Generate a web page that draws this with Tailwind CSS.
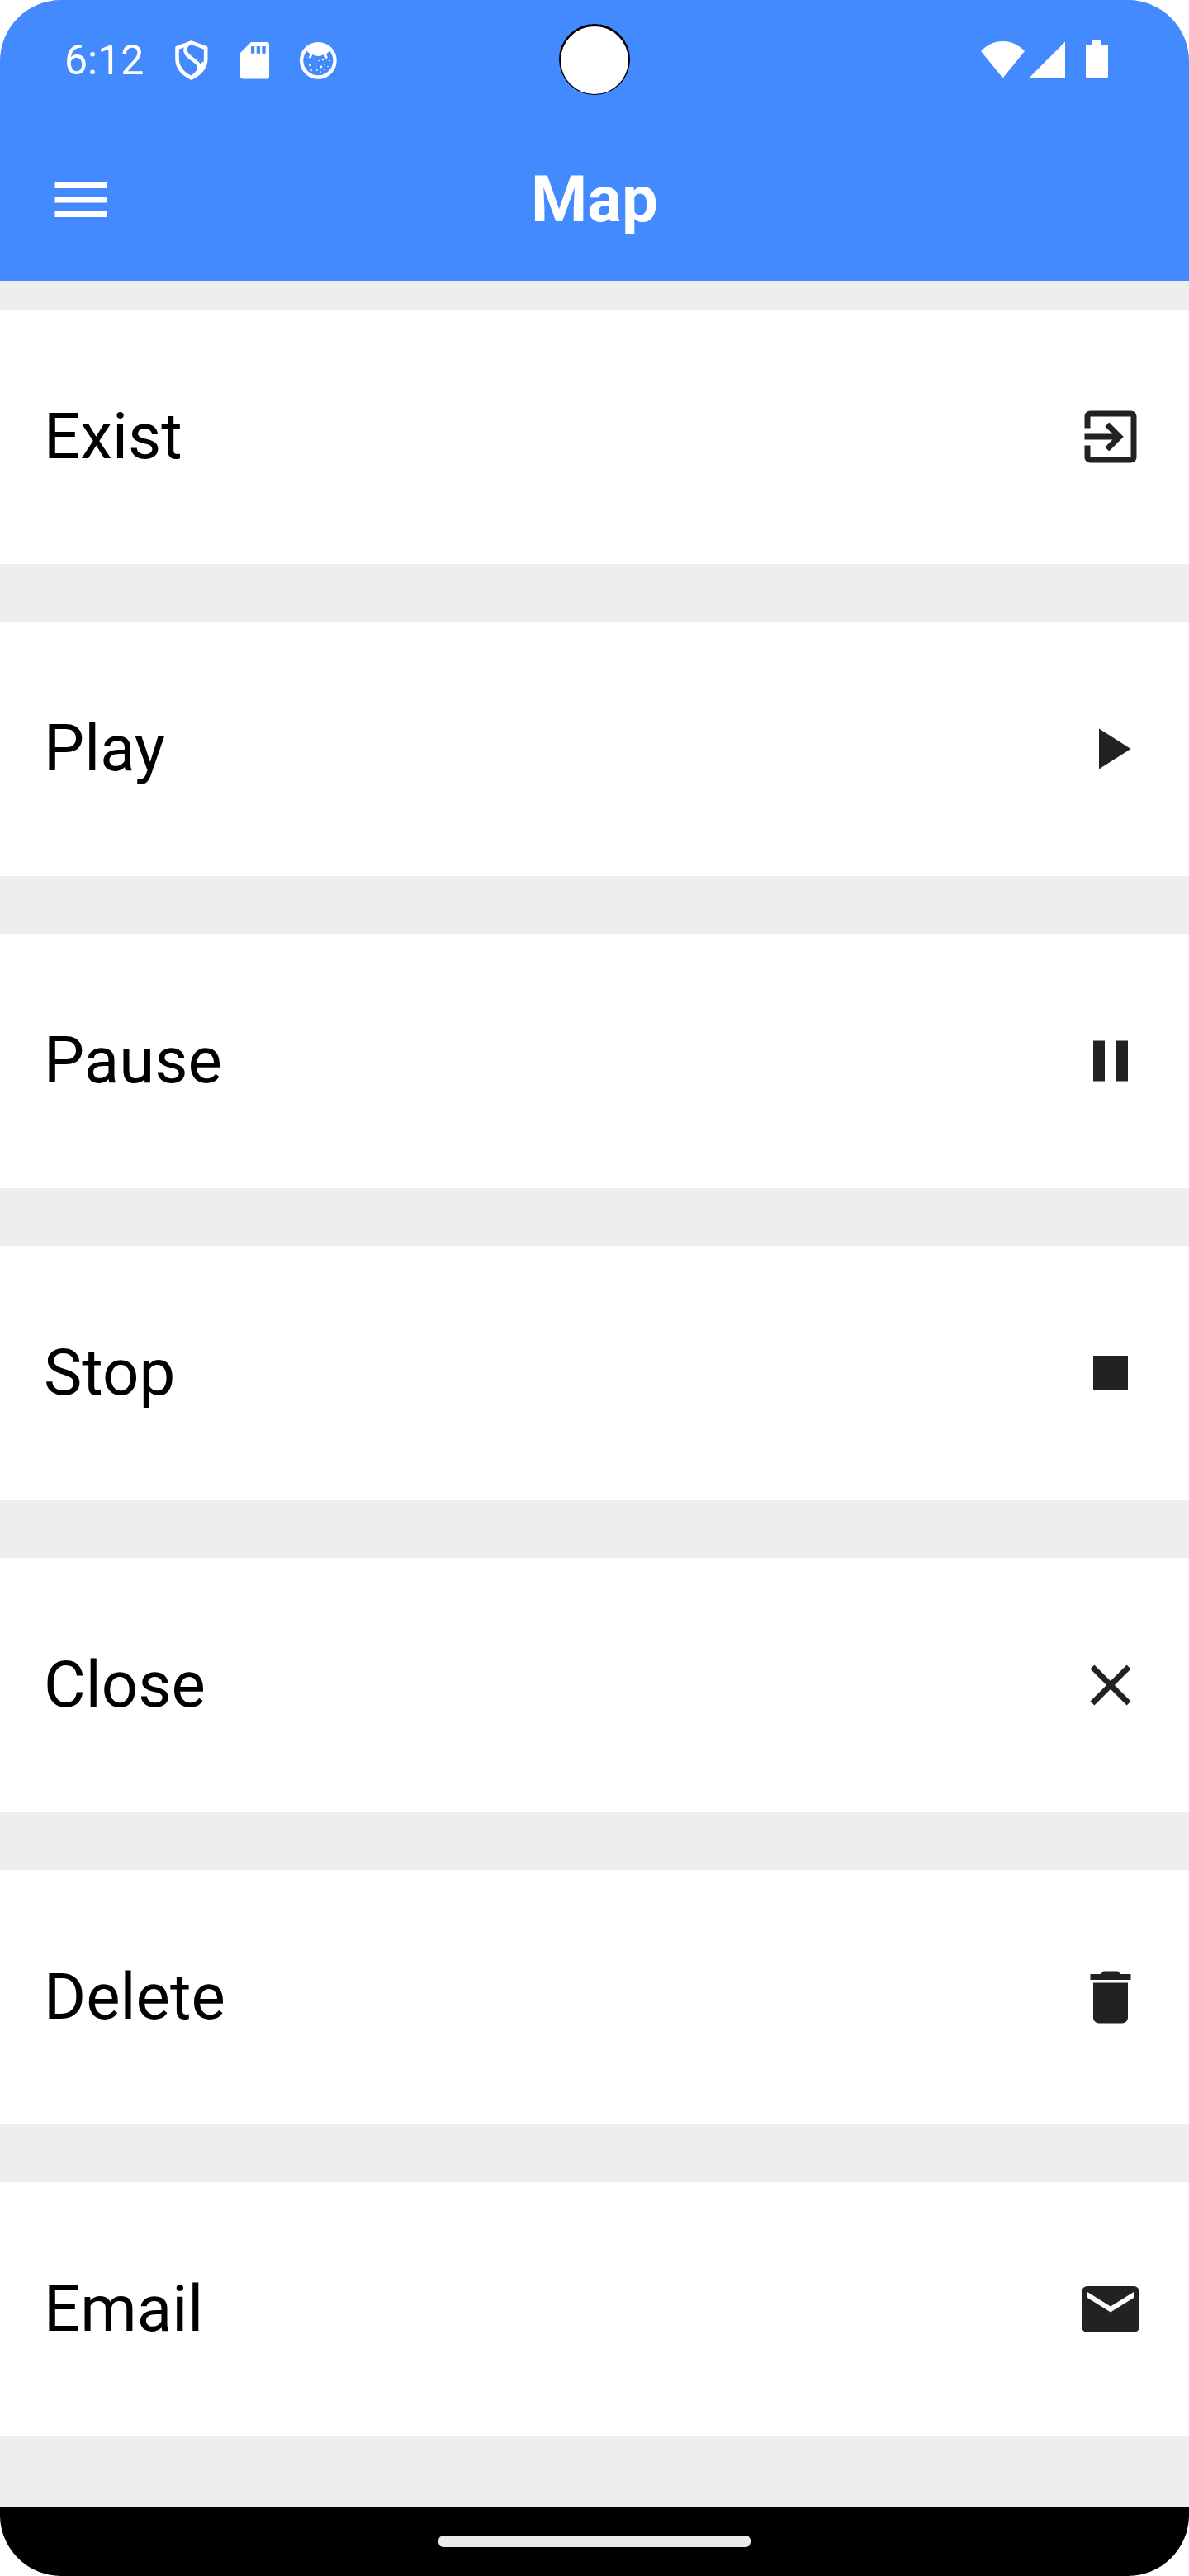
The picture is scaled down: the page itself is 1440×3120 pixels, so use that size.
<!DOCTYPE html>
<html lang="en">
<head>
<meta charset="utf-8">
<meta name="viewport" content="width=device-width, initial-scale=1">
<title>Map</title>
<script src="https://cdn.jsdelivr.net/npm/@tailwindcss/browser@4"></script>
</head>
<body class="bg-white font-[Roboto,sans-serif]">
<div class="flex min-h-screen flex-col overflow-hidden rounded-[74px] bg-[#eeeeee]">

  <header class="bg-[#448aff] pb-0.5 text-white">
    <!-- Status bar -->
    <div class="grid h-[146px] grid-cols-[1fr_auto_1fr] items-center px-[78px]">
      <div class="flex items-center gap-8">
        <time class="text-[50px] leading-[56px]">6:12</time>
        <div class="flex gap-[25px]">
          <svg class="size-[52px]" viewBox="0 0 52 52" fill="none" stroke="currentColor" stroke-width="4.6" stroke-linejoin="round">
            <path d="M25.7 4.6 43.2 11v13c0 11-7.5 18.5-17.5 23.4C15.7 42.5 8.5 35 8.500 24V11z"/>
            <path d="M25.7 4.6C17 7 17.5 15 20.5 19c4 5 12.500 8.500 14.500 13.500 2 5-2.500 10-9.300 14.900M36 36l5-7"/>
          </svg>
          <svg class="size-[52px]" viewBox="0 0 52 52" fill="currentColor">
            <path fill-rule="evenodd" d="M21 4h19a3 3 0 0 1 3 3v38.500a3 3 0 0 1-3 3H11a3 3 0 0 1-3-3V17zM21 9v8.700h4.200V9zM27.700 9v8.700H32V9zM34.300 9v8.700h4.400V9z"/>
          </svg>
          <svg class="size-[52px]" viewBox="0 0 52 52" fill="currentColor">
            <circle cx="25.3" cy="26.3" r="20.2" fill="none" stroke="currentColor" stroke-width="4.4"/>
            <path d="M9.500 12C17 3 33.600 3 41 12l-2.500 3.500-3.500 3 2 4.500-2.500 1-2.500-5c-4 2.500-9.400 2.500-13.400 0l-2.500 5-2.500-1 2-4.500-3.500-3z"/>
            <g>
              <circle cx="10.500" cy="22.500" r=".8"/><circle cx="19.500" cy="24.500" r=".8"/><circle cx="26" cy="26.500" r=".8"/>
              <circle cx="31" cy="25" r="1.300"/><circle cx="39.500" cy="26.500" r=".7"/><circle cx="10.500" cy="29" r=".7"/>
              <circle cx="15.500" cy="32" r="1.400"/><circle cx="21.500" cy="33.500" r=".7"/><circle cx="28.800" cy="34" r="1.400"/>
              <circle cx="32.700" cy="31.500" r=".7"/><circle cx="37" cy="33.500" r=".8"/><circle cx="17.300" cy="38" r=".9"/>
              <circle cx="23.800" cy="38" r=".9"/><circle cx="32.500" cy="37.500" r=".9"/><circle cx="28.300" cy="40" r=".8"/>
            </g>
          </svg>
        </div>
      </div>
      <!-- Camera cutout -->
      <svg class="mx-auto h-[88px] w-[86px]" viewBox="0 0 86 88">
        <circle cx="43" cy="43" r="43" fill="#000"/>
        <circle cx="43" cy="44" r="41" fill="#fff"/>
      </svg>
      <div class="flex items-center justify-end pr-5">
        <svg class="mr-[5px] h-[52px] w-[53px]" viewBox="0 0 53 52" fill="currentColor"><path d="M0 15C7 7.500 16 3 26.500 3S46 7.500 53 15L26.500 47.500z"/></svg>
        <svg class="mr-[25px] h-[52px] w-[44px]" viewBox="0 0 44 52" fill="currentColor"><path d="M44 3.500v44.300H0z"/></svg>
        <svg class="h-[52px] w-[27px]" viewBox="0 0 27 52" fill="currentColor"><path d="M8 2h11v5h7l1 1v38l-1 1H1l-1-1V8l1-1h7z"/></svg>
      </div>
    </div>
    <!-- Title bar -->
    <div class="grid h-[192px] grid-cols-[84px_1fr_84px] items-center px-14">
      <button type="button" aria-label="Menu" class="size-[84px]">
        <svg class="size-[84px]" viewBox="0 0 24 24" fill="currentColor"><path d="M3 18h18v-2H3v2zm0-5h18v-2H3v2zm0-7v2h18V6H3z"/></svg>
      </button>
      <h1 class="text-center text-[78px] leading-[92px] font-bold">Map</h1>
    </div>
  </header>

  <main class="grow pt-[35px] pb-[85px]">
    <ul class="flex flex-col gap-[70px] text-[78px] leading-[92px] text-black">
      <li><button type="button" class="flex h-[308px] w-full items-center justify-between bg-white px-[53px] text-left">Exist
        <svg class="size-[84px] fill-[#222222]" viewBox="0 0 24 24"><path d="M10.090 15.590 11.500 17l5-5-5-5-1.410 1.410L12.670 11H3v2h9.670l-2.580 2.590zM19 3H5c-1.110 0-2 .9-2 2v4h2V5h14v14H5v-4H3v4c0 1.100.89 2 2 2h14c1.100 0 2-.9 2-2V5c0-1.100-.9-2-2-2z"/></svg></button></li>
      <li><button type="button" class="flex h-[308px] w-full items-center justify-between bg-white px-[53px] text-left">Play
        <svg class="size-[84px] fill-[#222222]" viewBox="0 0 24 24"><path d="M8 5v14l11-7z"/></svg></button></li>
      <li><button type="button" class="flex h-[308px] w-full items-center justify-between bg-white px-[53px] text-left">Pause
        <svg class="size-[84px] fill-[#222222]" viewBox="0 0 24 24"><path d="M6 19h4V5H6v14zm8-14v14h4V5h-4z"/></svg></button></li>
      <li><button type="button" class="flex h-[308px] w-full items-center justify-between bg-white px-[53px] text-left">Stop
        <svg class="size-[84px] fill-[#222222]" viewBox="0 0 24 24"><path d="M6 6h12v12H6z"/></svg></button></li>
      <li><button type="button" class="flex h-[308px] w-full items-center justify-between bg-white px-[53px] text-left">Close
        <svg class="size-[84px] fill-[#222222]" viewBox="0 0 24 24"><path d="M19 6.410 17.590 5 12 10.590 6.410 5 5 6.410 10.590 12 5 17.590 6.410 19 12 13.410 17.590 19 19 17.590 13.410 12z"/></svg></button></li>
      <li><button type="button" class="flex h-[308px] w-full items-center justify-between bg-white px-[53px] text-left">Delete
        <svg class="size-[84px] fill-[#222222]" viewBox="0 0 24 24"><path d="M6 19c0 1.100.9 2 2 2h8c1.100 0 2-.9 2-2V7H6v12zM19 4h-3.500l-1-1h-5l-1 1H5v2h14V4z"/></svg></button></li>
      <li><button type="button" class="flex h-[308px] w-full items-center justify-between bg-white px-[53px] text-left">Email
        <svg class="size-[84px] fill-[#222222]" viewBox="0 0 24 24"><path d="M20 4H4c-1.100 0-1.990.9-1.990 2L2 18c0 1.100.9 2 2 2h16c1.100 0 2-.9 2-2V6c0-1.100-.9-2-2-2zm0 4-8 5-8-5V6l8 5 8-5v2z"/></svg></button></li>
    </ul>
  </main>

  <!-- Gesture bar -->
  <footer class="flex h-[84px] items-center justify-center bg-black">
    <div class="h-3.5 w-[378px] rounded-md bg-[#ebebeb]"></div>
  </footer>
</div>
</body>
</html>
